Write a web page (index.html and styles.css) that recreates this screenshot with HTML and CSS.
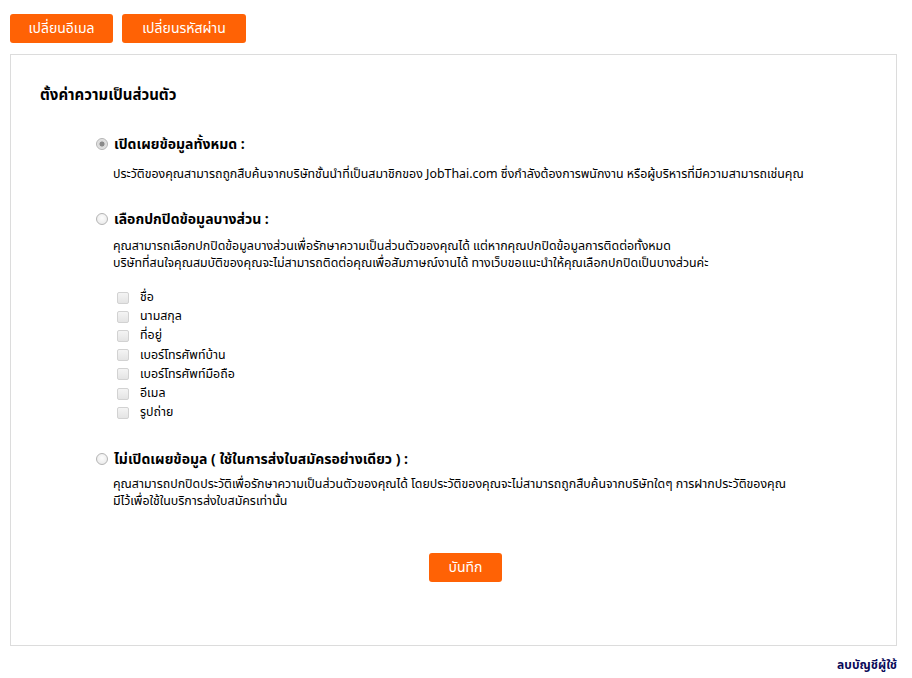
FILE: index.html
```html
<!DOCTYPE html>
<html lang="th">
<head>
<meta charset="utf-8">
<link rel="stylesheet" href="styles.css">
</head>
<body>
<div class="page">
  <div class="tabs">
    <button class="btn btn-email">เปลี่ยนอีเมล</button>
    <button class="btn btn-pass">เปลี่ยนรหัสผ่าน</button>
  </div>
  <div class="box">
    <h2 class="title">ตั้งค่าความเป็นส่วนตัว</h2>
    <div class="options">
      <div class="option">
        <label class="opt-head"><input type="radio" name="p" class="radio" checked> <span class="opt-label">เปิดเผยข้อมูลทั้งหมด :</span></label>
        <p class="desc desc-first">ประวัติของคุณสามารถถูกสืบค้นจากบริษัทชั้นนำที่เป็นสมาชิกของ JobThai.com ซึ่งกำลังต้องการพนักงาน หรือผู้บริหารที่มีความสามารถเช่นคุณ</p>
      </div>
      <div class="option">
        <label class="opt-head"><input type="radio" name="p" class="radio"> <span class="opt-label">เลือกปกปิดข้อมูลบางส่วน :</span></label>
        <p class="desc">คุณสามารถเลือกปกปิดข้อมูลบางส่วนเพื่อรักษาความเป็นส่วนตัวของคุณได้ แต่หากคุณปกปิดข้อมูลการติดต่อทั้งหมด<br>บริษัทที่สนใจคุณสมบัติของคุณจะไม่สามารถติดต่อคุณเพื่อสัมภาษณ์งานได้ ทางเว็บขอแนะนำให้คุณเลือกปกปิดเป็นบางส่วนค่ะ</p>
        <ul class="checks">
          <li><input type="checkbox" class="cb" disabled><span>ชื่อ</span></li>
          <li><input type="checkbox" class="cb" disabled><span>นามสกุล</span></li>
          <li><input type="checkbox" class="cb" disabled><span>ที่อยู่</span></li>
          <li><input type="checkbox" class="cb" disabled><span>เบอร์โทรศัพท์บ้าน</span></li>
          <li><input type="checkbox" class="cb" disabled><span>เบอร์โทรศัพท์มือถือ</span></li>
          <li><input type="checkbox" class="cb" disabled><span>อีเมล</span></li>
          <li><input type="checkbox" class="cb" disabled><span>รูปถ่าย</span></li>
        </ul>
      </div>
      <div class="option">
        <label class="opt-head"><input type="radio" name="p" class="radio"> <span class="opt-label">ไม่เปิดเผยข้อมูล ( ใช้ในการส่งใบสมัครอย่างเดียว ) :</span></label>
        <p class="desc desc-last">คุณสามารถปกปิดประวัติเพื่อรักษาความเป็นส่วนตัวของคุณได้ โดยประวัติของคุณจะไม่สามารถถูกสืบค้นจากบริษัทใดๆ การฝากประวัติของคุณ<br>มีไว้เพื่อใช้ในบริการส่งใบสมัครเท่านั้น</p>
      </div>
    </div>
    <div class="save-row"><button class="btn btn-save">บันทึก</button></div>
  </div>
  <div class="footer"><a class="delete">ลบบัญชีผู้ใช้</a></div>
</div>
</body>
</html>
```
FILE: styles.css
```css
html, body {
  margin: 0;
  padding: 0;
  background: #fff;
}
body {
  font-family: Tahoma, "Noto Sans Thai", "Noto Sans", sans-serif;
  font-size: 12px;
  color: #000;
}
.page {
  padding: 14px 15px 0 10px;
}
.tabs {
  display: flex;
  gap: 9px;
}
.btn {
  background: #ff6205;
  color: #fff;
  border: none;
  border-radius: 3px;
  font-family: inherit;
  font-size: 14px;
  height: 29px;
  padding: 0;
  cursor: pointer;
}
.btn-email { width: 103px; }
.btn-pass { width: 124px; }
.box {
  margin-top: 11px;
  border: 1px solid #dcdcdc;
  padding: 30px 29px 0 29px;
  height: 592px;
  box-sizing: border-box;
}
.title {
  margin: 0;
  font-size: 15px;
  font-weight: bold;
  line-height: 22px;
}
.options {
  padding-left: 56px;
  margin-top: 26px;
}
.option {
  margin-bottom: 25px;
}
.opt-head {
  display: flex;
  align-items: center;
  height: 22px;
}
.radio {
  appearance: none;
  -webkit-appearance: none;
  margin: 0 6px 0 0;
  width: 12px;
  height: 12px;
  border-radius: 50%;
  border: 1px solid #b4b4b4;
  background: radial-gradient(circle at 50% 40%, #fdfdfd 0%, #e6e6e6 100%);
  box-sizing: border-box;
  flex: none;
}
.radio:checked {
  background: radial-gradient(circle, #8a8a8a 0, #8a8a8a 2.2px, #d8d8d8 2.8px, #f2f2f2 100%);
}
.opt-label {
  font-size: 14px;
  font-weight: bold;
}
.desc {
  margin: 8px 0 0 17px;
  line-height: 17px;
  font-size: 12.4px;
}
.desc-first {
  margin-top: 11px;
}
.desc-last {
  margin-top: 6px;
}
.checks {
  list-style: none;
  margin: 16px 0 0 21px;
  padding: 0 0 1px 0;
}
.checks li {
  display: flex;
  align-items: center;
  height: 19.2px;
  font-size: 12.4px;
}
.cb {
  appearance: none;
  -webkit-appearance: none;
  margin: 0 11px 0 0;
  width: 12px;
  height: 12px;
  border: 1px solid #d2d2d2;
  border-radius: 2px;
  background: linear-gradient(#f4f4f4, #e4e4e4);
  box-sizing: border-box;
  flex: none;
}
.save-row {
  display: flex;
  justify-content: center;
  margin-top: 43px;
  padding-left: 24px;
}
.btn-save { width: 73px; }
.footer {
  display: flex;
  justify-content: flex-end;
  padding-top: 10px;
}
.delete {
  color: #0a0a5a;
  font-weight: bold;
  font-size: 12px;
}
```
